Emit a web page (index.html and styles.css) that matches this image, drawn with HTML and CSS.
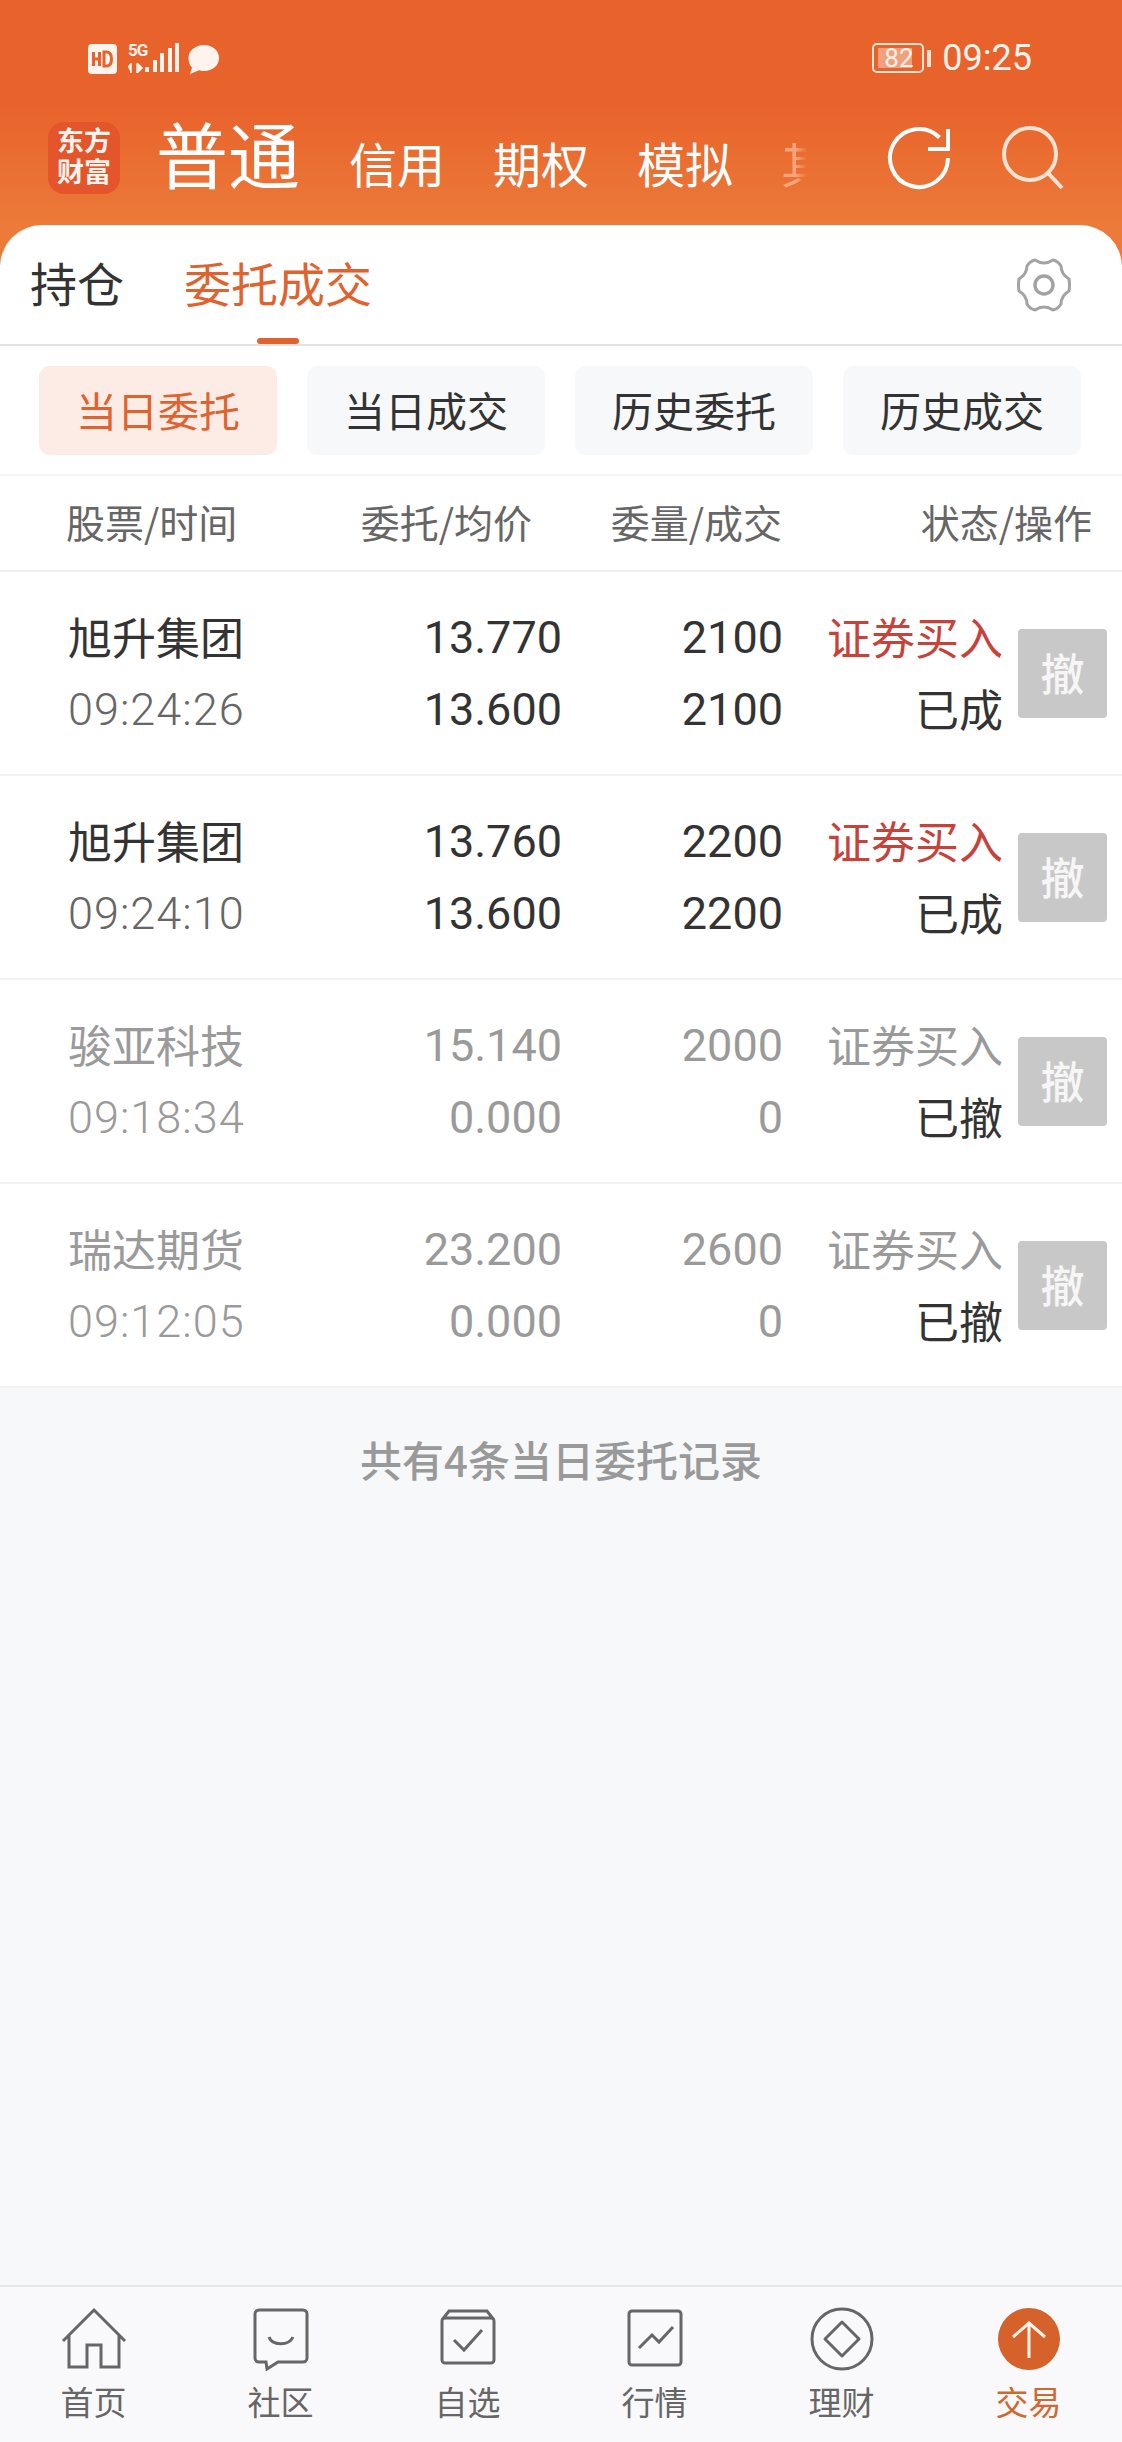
FILE: index.html
```html
<!DOCTYPE html>
<html lang="zh">
<head>
<meta charset="utf-8"/>
<title>交易</title>
<link rel="stylesheet" href="styles.css">
</head>
<body>

<div id="app">

<div id="top">
  <div class="status">
    <div class="status-left">
      <svg class="ico-hd" width="29" height="30" viewBox="0 0 29 30"><rect width="29" height="30" rx="4" fill="#fff3ee"/><path d="M5.500 8v14M11.500 8v14M5.500 15h6M16 8v14h2.500c3.500 0 5-3 5-7s-1.500-7-5-7z" fill="none" stroke="#e8622b" stroke-width="3"/></svg>
      <div class="net">
        <span class="net-5g">5G</span>
        <svg width="16" height="10" viewBox="0 0 16 10"><path d="M0 4l3-3v9M3 4M9 0v10l5-5z" fill="#fff3ee" stroke="#fff3ee" stroke-width="1.500"/></svg>
      </div>
      <div class="bars"><i class="b0"></i><i class="b1"></i><i class="b2"></i><i class="b3"></i><i class="b4"></i></div>
      <svg class="ico-msg" width="31" height="29" viewBox="0 0 31 29"><path d="M16 0c8.500 0 15 5.500 15 13s-6.500 13-15 13c-2 0-3.500-.3-5-.8L2 29l2-6.500C1.500 20 .5 17 .5 13 .5 5.500 7.500 0 16 0z" fill="#fff3ee"/></svg>
    </div>
    <div class="status-right">
      <div class="batt"><span class="batt-fill"></span><span class="batt-num">82</span></div>
      <span class="batt-tip"></span>
      <span class="clock">09:25</span>
    </div>
  </div>

  <div class="nav">
    <div class="logo">东方<br>财富</div>
    <span class="nav-main">普通</span>
    <span class="nav-item">信用</span>
    <span class="nav-item">期权</span>
    <span class="nav-item">模拟</span>
    <span class="nav-item nav-fade">其</span>
    <svg class="ico-refresh" width="68" height="66" viewBox="0 0 68 66"><path d="M63 32A29 29 0 1 1 54.500 11.500" fill="none" stroke="#fff" stroke-width="4"/><path d="M63 3v20H43" fill="none" stroke="#fff" stroke-width="4"/></svg>
    <svg class="ico-search" width="64" height="66" viewBox="0 0 64 66"><circle cx="30" cy="28" r="26" fill="none" stroke="#ffe3d4" stroke-width="4"/><path d="M48 47l14 15" stroke="#ffe3d4" stroke-width="4" fill="none"/></svg>
  </div>
</div>

<div id="sheet">
  <div class="tabs">
    <a class="tab">持仓</a>
    <a class="tab tab-on">委托成交</a>
    <svg class="ico-gear" width="54" height="54" viewBox="0 0 54 54"><path d="M18 2Q27 8 36 2Q41 3 44 8Q44 16 52 21Q53 27 52 33Q44 38 44 46Q41 51 36 52Q27 46 18 52Q13 51 10 46Q10 38 2 33Q1 27 2 21Q10 16 10 8Q13 3 18 2Z" fill="none" stroke="#a3a3a3" stroke-width="3"/><circle cx="27" cy="27" r="9" fill="none" stroke="#a3a3a3" stroke-width="3.500"/></svg>
  </div>

  <div class="chips">
    <a class="chip chip-on">当日委托</a>
    <a class="chip">当日成交</a>
    <a class="chip">历史委托</a>
    <a class="chip">历史成交</a>
  </div>

  <div class="thead">
    <span class="c1">股票/时间</span>
    <span class="c2">委托/均价</span>
    <span class="c3">委量/成交</span>
    <span class="c4">状态/操作</span>
  </div>

  <div class="row">
    <div class="c1"><b>旭升集团</b><em>09:24:26</em></div>
    <div class="c2"><b>13.770</b><b>13.600</b></div>
    <div class="c3"><b>2100</b><b>2100</b></div>
    <div class="c4"><b class="buy">证券买入</b><b>已成</b></div>
    <a class="cancel">撤</a>
  </div>

  <div class="row">
    <div class="c1"><b>旭升集团</b><em>09:24:10</em></div>
    <div class="c2"><b>13.760</b><b>13.600</b></div>
    <div class="c3"><b>2200</b><b>2200</b></div>
    <div class="c4"><b class="buy">证券买入</b><b>已成</b></div>
    <a class="cancel">撤</a>
  </div>

  <div class="row row-off">
    <div class="c1"><b>骏亚科技</b><em>09:18:34</em></div>
    <div class="c2"><b>15.140</b><b>0.000</b></div>
    <div class="c3"><b>2000</b><b>0</b></div>
    <div class="c4"><b>证券买入</b><b class="done">已撤</b></div>
    <a class="cancel">撤</a>
  </div>

  <div class="row row-off">
    <div class="c1"><b>瑞达期货</b><em>09:12:05</em></div>
    <div class="c2"><b>23.200</b><b>0.000</b></div>
    <div class="c3"><b>2600</b><b>0</b></div>
    <div class="c4"><b>证券买入</b><b class="done">已撤</b></div>
    <a class="cancel">撤</a>
  </div>

  <div class="empty">
    <p>共有4条当日委托记录</p>
  </div>
</div>

<div id="bottom">
  <a class="bt">
    <svg width="66" height="62" viewBox="0 0 66 62"><path d="M2 33L33 2l31 31M8 27v32h18V37h14v22h18V27" fill="none" stroke="#666" stroke-width="3"/></svg>
    <span>首页</span>
  </a>
  <a class="bt">
    <svg width="60" height="62" viewBox="0 0 60 62"><path d="M8 2h44a4 4 0 0 1 4 4v44a4 4 0 0 1-4 4H27l-11 7-1-7H8a4 4 0 0 1-4-4V6a4 4 0 0 1 4-4z" fill="none" stroke="#666" stroke-width="3"/><path d="M18 29c3 9 20 9 24 0" fill="none" stroke="#666" stroke-width="3"/></svg>
    <span>社区</span>
  </a>
  <a class="bt">
    <svg width="56" height="62" viewBox="0 0 56 62"><path d="M2 12L9 3h38l7 9M5 10h46a3 3 0 0 1 3 3v39a3 3 0 0 1-3 3H5a3 3 0 0 1-3-3V13a3 3 0 0 1 3-3z" fill="none" stroke="#666" stroke-width="3"/><path d="M14 32l10 10 18-20" fill="none" stroke="#666" stroke-width="3"/></svg>
    <span>自选</span>
  </a>
  <a class="bt">
    <svg width="56" height="62" viewBox="0 0 56 62"><rect x="2" y="3" width="52" height="54" rx="3" fill="none" stroke="#666" stroke-width="3"/><path d="M12 40l13-13 7 7 14-15" fill="none" stroke="#666" stroke-width="3"/></svg>
    <span>行情</span>
  </a>
  <a class="bt">
    <svg width="64" height="64" viewBox="0 0 64 64"><circle cx="32" cy="32" r="30" fill="none" stroke="#666" stroke-width="3"/><path d="M32 15l17 17-17 17-17-17z" fill="none" stroke="#666" stroke-width="3" stroke-linejoin="round"/></svg>
    <span>理财</span>
  </a>
  <a class="bt bt-on">
    <svg width="64" height="64" viewBox="0 0 64 64"><circle cx="32" cy="32" r="31" fill="#d4622a"/><path d="M32 51V16M16 30l16-14 16 14" fill="none" stroke="#fff3ea" stroke-width="3"/></svg>
    <span>交易</span>
  </a>
</div>

</div>

</body>
</html>
```

FILE: styles.css
```css
html, body {
  margin: 0;
  padding: 0;
}

body {
  font-family: "Noto Sans CJK SC", "Roboto", sans-serif;
  color: #333333;
}

a {
  color: inherit;
  text-decoration: none;
}

b, em {
  font-weight: normal;
  font-style: normal;
  display: block;
}

#app {
  width: 1122px;
  height: 2442px;
  display: flex;
  flex-direction: column;
  background: #f7f8fa;
  overflow: hidden;
}

#top {
  height: 265px;
  margin-bottom: -40px;
  flex: none;
  background: linear-gradient(#e8622b 0, #e8622b 100px, #ec7a39 225px);
  color: #ffffff;
}

.status {
  height: 72px;
  padding: 42px 0 0 88px;
  display: flex;
  justify-content: space-between;
}

.status-left {
  display: flex;
  height: 32px;
}

.ico-hd {
  margin: 2px 11px 0 0;
}

.net {
  width: 17px;
  height: 30px;
  margin-top: 1px;
  display: flex;
  flex-direction: column;
  justify-content: space-between;
}

.net-5g {
  font: bold 17px/14px "Roboto", sans-serif;
  letter-spacing: -1px;
  color: #fff3ee;
}

.bars {
  width: 34px;
  height: 30px;
  display: flex;
  align-items: flex-end;
  gap: 3.500px;
  margin: 0 9px 2px 0;
}

.bars i {
  display: block;
  width: 4px;
  flex: none;
  background: #fff3ee;
}

.bars .b0 { height: 5px; }
.bars .b1 { height: 12px; }
.bars .b2 { height: 19px; }
.bars .b3 { height: 24px; }
.bars .b4 { height: 29px; }

.ico-msg {
  margin-top: 3px;
}

.status-right {
  display: flex;
  align-items: center;
  height: 32px;
  padding-right: 90px;
}

.batt {
  width: 52px;
  height: 30px;
  box-sizing: border-box;
  border: 2px solid #ffe3d4;
  border-radius: 5px;
  padding: 3px 4px;
  position: relative;
}

.batt-fill {
  display: block;
  width: 34px;
  height: 20px;
  background: #f19f7c;
}

.batt-num {
  position: absolute;
  left: 10px;
  top: 0;
  font: 26px/26px "Roboto", sans-serif;
  color: #fff3ee;
}

.batt-tip {
  width: 4px;
  height: 17px;
  margin: 0 11px 0 3px;
  background: #ffe3d4;
}

.clock {
  font: 36px/32px "Roboto", sans-serif;
  color: #fff3ee;
}

.nav {
  padding: 0 0 0 48px;
  margin-top: 8px;
  height: 80px;
  display: flex;
  align-items: flex-start;
  position: relative;
}

.logo {
  width: 72px;
  height: 72px;
  border-radius: 16px;
  background: #e5552b;
  text-align: center;
  font-family: "Liberation Sans", "Noto Sans CJK SC", sans-serif;
  font-size: 27px;
  font-weight: bold;
  line-height: 31px;
  padding-top: 5px;
  box-sizing: border-box;
  color: #fff3ee;
}

.nav-main {
  margin: -8px 0 0 36px;
  font-size: 72px;
  line-height: 76px;
}

.nav-item {
  margin-top: 8px;
  font-size: 48px;
  line-height: 64px;
  width: 144px;
  flex: none;
  white-space: nowrap;
}

.nav-main + .nav-item {
  margin-left: 49px;
}

.nav-fade {
  width: 48px;
  color: #f6a47c;
  -webkit-mask-image: linear-gradient(90deg, #000 0, #000 30%, transparent 55%);
  mask-image: linear-gradient(90deg, #000 0, #000 30%, transparent 55%);
}

.ico-refresh {
  position: absolute;
  left: 885px;
  top: 4px;
}

.ico-search {
  position: absolute;
  left: 1000px;
  top: 4px;
}

#sheet {
  flex: 1;
  position: relative;
  border-radius: 42px 42px 0 0;
  background: #ffffff;
  display: flex;
  flex-direction: column;
}

.tabs {
  height: 119px;
  flex: none;
  border-bottom: 2px solid #e2e2e2;
  display: flex;
  padding-left: 30px;
  position: relative;
}

.tab {
  font-size: 47px;
  line-height: 58px;
  margin: 28px 60px 0 0;
}

.tab-on {
  color: #e0632f;
  position: relative;
  height: 91px;
}

.tab-on::after {
  content: "";
  position: absolute;
  left: 73px;
  bottom: 0;
  width: 42px;
  height: 6px;
  border-radius: 3px;
  background: #e0632f;
}

.ico-gear {
  position: absolute;
  right: 51px;
  top: 33px;
}

.chips {
  height: 130px;
  flex: none;
  box-sizing: border-box;
  padding: 20px 39px 0 39px;
  border-bottom: 2px solid #f5f5f5;
  display: flex;
  gap: 30px;
}

.chip {
  width: 238px;
  height: 89px;
  border-radius: 11px;
  background: #f7f8fa;
  font-size: 41px;
  line-height: 87px;
  text-align: center;
}

.chip-on {
  background: #fcece5;
  color: #e0632f;
}

.thead {
  height: 94px;
  flex: none;
  border-bottom: 2px solid #eeeeee;
  display: flex;
  font-size: 39px;
  line-height: 90px;
  color: #666666;
}

.thead .c1 { width: 360px; padding-left: 66px; box-sizing: border-box; }
.thead .c2 { width: 172px; text-align: right; white-space: nowrap; }
.thead .c3 { width: 250px; text-align: right; white-space: nowrap; }
.thead .c4 { width: 310px; text-align: right; white-space: nowrap; }

.row {
  height: 202px;
  flex: none;
  border-bottom: 2px solid #f2f2f2;
  display: flex;
  position: relative;
  font-size: 44px;
  line-height: 72px;
  color: #333333;
}

.row > div {
  padding-top: 28px;
  white-space: nowrap;
}

.row .c1 { width: 328px; padding-left: 68px; box-sizing: border-box; }
.row .c2 { width: 234px; text-align: right; }
.row .c3 { width: 221px; text-align: right; }
.row .c4 { width: 220px; text-align: right; }

.row .c2,
.row .c3,
.row .c1 em {
  font-family: "Roboto", sans-serif;
  font-size: 45px;
  font-weight: 300;
}

.row .c2,
.row .c3 {
  padding-top: 30px;
}

.row .c1 em {
  margin-top: 2px;
  color: #666666;
  letter-spacing: 1px;
}

.row .buy {
  color: #c8423c;
}

.row-off,
.row-off .c1 em {
  color: #9a9a9a;
}

.row-off .done {
  color: #333333;
}

.cancel {
  position: absolute;
  left: 1018px;
  top: 57px;
  width: 89px;
  height: 89px;
  border-radius: 4px;
  background: #c8c8c8;
  color: #f6f6f6;
  font-size: 44px;
  font-weight: 500;
  line-height: 87px;
  text-align: center;
}

.empty {
  flex: 1;
  background: #f7f8fa;
}

.empty p {
  margin: 0;
  padding-top: 43px;
  font-size: 42px;
  font-weight: 500;
  line-height: 56px;
  text-align: center;
  color: #999999;
}

#bottom {
  height: 155px;
  flex: none;
  background: #f9f9fb;
  border-top: 2px solid #e6e6e6;
  display: flex;
}

.bt {
  flex: 1;
  display: flex;
  flex-direction: column;
  align-items: center;
  padding-top: 20px;
  box-sizing: border-box;
  font-size: 33px;
  line-height: 44px;
  color: #666666;
}

.bt svg {
  height: 64px;
  display: block;
}

.bt span {
  margin-top: 8px;
}

.bt-on {
  color: #d0682f;
}
```
